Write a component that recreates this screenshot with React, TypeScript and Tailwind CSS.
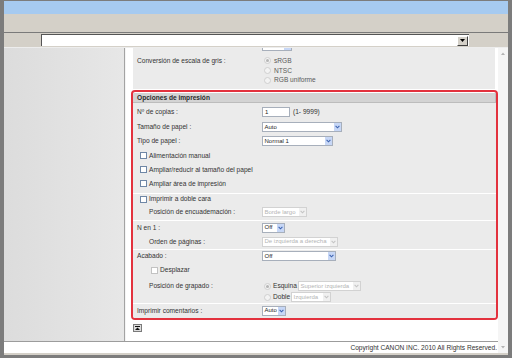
import React from "react";

type Kids = { children?: React.ReactNode };

function Chevron({ off }: { off?: boolean }) {
  return (
    <svg width="5" height="4" viewBox="0 0 5 4" className="block">
      <path d="M0.6 0.9 L2.5 2.8 L4.4 0.9" fill="none" stroke={off ? "#c4c4c4" : "#3d63b0"} strokeWidth="1.1" />
    </svg>
  );
}

// select box, size is a full w-[..] class
function Select({ value, size, off }: { value: string; size: string; off?: boolean }) {
  return (
    <div
      className={`flex h-[10px] shrink-0 items-stretch border bg-white text-[6px] ${size} ${
        off ? "border-[#d2d2d2] text-[#b4b4b4]" : "border-[#a7afbb] text-[#1e1e1e]"
      }`}
    >
      <span className="flex flex-1 items-center overflow-hidden whitespace-nowrap pl-[1.5px]">{value}</span>
      <span className={`flex w-[7px] shrink-0 items-center justify-center ${off ? "bg-[#f0f0f0]" : "bg-[#c7d7f6]"}`}>
        <Chevron off={off} />
      </span>
    </div>
  );
}

function Radio({ on }: { on?: boolean }) {
  return (
    <span className="flex h-[7px] w-[7px] shrink-0 items-center justify-center rounded-full border border-[#cfcfcf] bg-[#f3f3f3]">
      {on && <span className="h-[3px] w-[3px] rounded-full bg-[#b5b5b5]" />}
    </span>
  );
}

function Check({ light }: { light?: boolean }) {
  return (
    <span
      className={`h-[7px] w-[7px] shrink-0 border bg-white ${light ? "border-[#c2c2c2]" : "border-[#6f87a6]"}`}
    />
  );
}

function Row({ h, label, indent, children }: Kids & { h: string; label: string; indent?: boolean }) {
  return (
    <div className={`flex items-center ${h}`}>
      <div className={`w-[129px] shrink-0 ${indent ? "pl-[16px]" : "pl-[4px]"}`}>{label}</div>
      {children}
    </div>
  );
}

function CheckRow({ h, text, indent }: { h: string; text: string; indent?: boolean }) {
  return (
    <div className={`flex items-center gap-[2px] ${h} ${indent ? "pl-[18px]" : "pl-[7px]"}`}>
      <Check light={indent} />
      <span>{text}</span>
    </div>
  );
}

export default function App() {
  return (
    <div className="h-[358px] w-[512px] overflow-hidden font-['Liberation_Sans',Arial,sans-serif] text-[6.6px] text-[#333]">
      <div className="flex h-full flex-col border-x-4 border-t border-b-[3px] border-[#7c7c7c]">
        {/* title + menu bars */}
        <div className="h-[13px] shrink-0 bg-[#a6caf0]" />
        <div className="h-[18px] shrink-0 bg-[#d4d0c8]" />
        <div className="h-px shrink-0 bg-[#7a7a7a]" />
        <div className="flex h-[14px] shrink-0 items-start bg-[#d4d0c8] pt-px">
          <div className="ml-[37px] flex h-[12px] w-[428px] items-center justify-end border-t border-l border-[#555] bg-white pr-px">
            <div className="flex h-[10px] w-[11px] items-center justify-center border border-t-white border-l-white border-r-[#404040] border-b-[#404040] bg-[#d4d0c8]">
              <svg width="5" height="3" viewBox="0 0 5 3" className="block">
                <path d="M0 0 H5 L2.5 3 Z" fill="#000" />
              </svg>
            </div>
          </div>
        </div>
        <div className="h-px shrink-0 bg-[#ededed]" />

        {/* main */}
        <div className="flex min-h-0 flex-1">
          <div className="flex min-w-0 flex-1 flex-col">
            <div className="flex min-h-0 flex-1">
              <div className="w-[120px] shrink-0 bg-linear-to-r from-[#dcdcdc] to-[#e7e7e7]" />
              <div className="w-px bg-[#a3a3a3]" />
              <div className="w-px bg-[#f4f4f4]" />

              <div className="flex min-w-0 flex-1 flex-col bg-white">
                {/* Grey scale panel (scrolled) */}
                <div className="ml-[7px] mr-[3px] flex h-[41px] shrink-0 flex-col bg-[#ebebeb]">
                  <div className="ml-[129px] flex h-[3px] w-[30px] justify-end border-x border-b border-[#a7afbb] bg-white">
                    <span className="w-[7px] bg-[#c7d7f6]" />
                  </div>
                  <div className="mt-[5px] flex">
                    <div className="flex h-[9.7px] w-[129px] shrink-0 items-center pl-[4px]">
                      Conversión de escala de gris :
                    </div>
                    <div className="flex flex-col text-[#5a5a5a]">
                      {[
                        ["sRGB", true],
                        ["NTSC", false],
                        ["RGB uniforme", false],
                      ].map(([t, on]) => (
                        <div key={t as string} className="ml-[2px] flex h-[9.7px] items-center gap-[3px]">
                          <Radio on={on as boolean} />
                          <span>{t}</span>
                        </div>
                      ))}
                    </div>
                  </div>
                </div>

                {/* Opciones de impresión */}
                <div className="ml-[5px] mt-px shrink-0 overflow-hidden rounded-[4px] border-2 border-[#e3323e] bg-white pt-px">
                  <div className="flex h-[10px] items-center border-r border-b border-[#bcbcbc] bg-[#d3d3d3] pl-[4px] font-bold text-[#2a2a2a]">
                    Opciones de impresión
                  </div>

                  <div className="bg-[#ebebeb] pb-[2px]">
                    <Row h="h-[17px]" label="Nº de copias :">
                      <div className="h-[10px] w-[28px] border border-[#a7afbb] bg-white pl-[2px] text-[6px] leading-[8px] text-[#1e1e1e]">
                        1
                      </div>
                      <span className="ml-[3px]">(1- 9999)</span>
                    </Row>
                    <Row h="h-[14.2px]" label="Tamaño de papel :">
                      <Select value="Auto" size="w-[80px]" />
                    </Row>
                    <Row h="h-[14.2px]" label="Tipo de papel :">
                      <Select value="Normal 1" size="w-[71px]" />
                    </Row>
                    <CheckRow h="h-[14.2px]" text="Alimentación manual" />
                    <CheckRow h="h-[14.2px]" text="Ampliar/reducir al tamaño del papel" />
                    <CheckRow h="h-[14.2px]" text="Ampliar área de impresión" />
                  </div>

                  <div className="border-t border-white bg-[#ebebeb]">
                    <CheckRow h="h-[11px]" text="Imprimir a doble cara" />
                    <Row h="h-[15px]" label="Posición de encuademación :" indent>
                      <Select value="Borde largo" size="w-[45px]" off />
                    </Row>
                  </div>

                  <div className="border-t border-white bg-[#ebebeb]">
                    <Row h="h-[14px]" label="N en 1 :">
                      <Select value="Off" size="w-[23px]" />
                    </Row>
                    <Row h="h-[14px]" label="Orden de páginas :" indent>
                      <Select value="De izquierda a derecha" size="w-[76px]" off />
                    </Row>
                  </div>

                  <div className="border-t border-white bg-[#ebebeb]">
                    <Row h="h-[13px]" label="Acabado :">
                      <Select value="Off" size="w-[74px]" />
                    </Row>
                    <CheckRow h="h-[15px]" text="Desplazar" indent />
                    <div className="flex h-[25px] items-start pt-[3px]">
                      <div className="flex h-[11px] w-[129px] shrink-0 items-center pl-[16px]">Posición de grapado :</div>
                      <div className="flex flex-col">
                        <div className="flex h-[11px] items-center">
                          <span className="ml-[2px]">
                            <Radio on />
                          </span>
                          <span className="ml-[2px] w-[25px]">Esquina</span>
                          <Select value="Superior izquierda" size="w-[63px]" off />
                        </div>
                        <div className="flex h-[11px] items-center">
                          <span className="ml-[2px]">
                            <Radio />
                          </span>
                          <span className="ml-[2px] w-[18px]">Doble</span>
                          <Select value="Izquierda" size="w-[40px]" off />
                        </div>
                      </div>
                    </div>
                  </div>

                  <div className="border-t border-white bg-[#ebebeb]">
                    <Row h="h-[14px]" label="Imprimir comentarios :">
                      <Select value="Auto" size="w-[24px]" />
                    </Row>
                  </div>
                </div>

                {/* back to top */}
                <div className="ml-[7px] mt-[4px]">
                  <svg width="9" height="8" viewBox="0 0 9 8" className="block">
                    <rect x="0.5" y="0.5" width="8" height="7" fill="#dcdcdc" stroke="#7a7a7a" />
                    <rect x="2" y="2" width="5" height="1" fill="#111" />
                    <path d="M2 6 L4.5 3.4 L7 6 Z" fill="#111" />
                  </svg>
                </div>
              </div>
            </div>
            <div className="h-px shrink-0 bg-[#9c9c9c]" />
            <div className="flex h-[11px] shrink-0 items-center justify-end bg-white pr-px">
              Copyright CANON INC. 2010 All Rights Reserved.
            </div>
          </div>

          {/* scrollbar */}
          <div className="flex w-[10px] shrink-0 flex-col items-center justify-between bg-[#f5f5f5] py-[4px]">
            <svg width="4" height="3" viewBox="0 0 4 3" className="block">
              <path d="M0 3 L2 0.5 L4 3 Z" fill="#b3b3b3" />
            </svg>
            <svg width="4" height="3" viewBox="0 0 4 3" className="block">
              <path d="M0 0 H4 L2 2.5 Z" fill="#b3b3b3" />
            </svg>
          </div>
        </div>
        <div className="h-[2px] shrink-0 bg-[#d4d0c8]" />
      </div>
    </div>
  );
}
